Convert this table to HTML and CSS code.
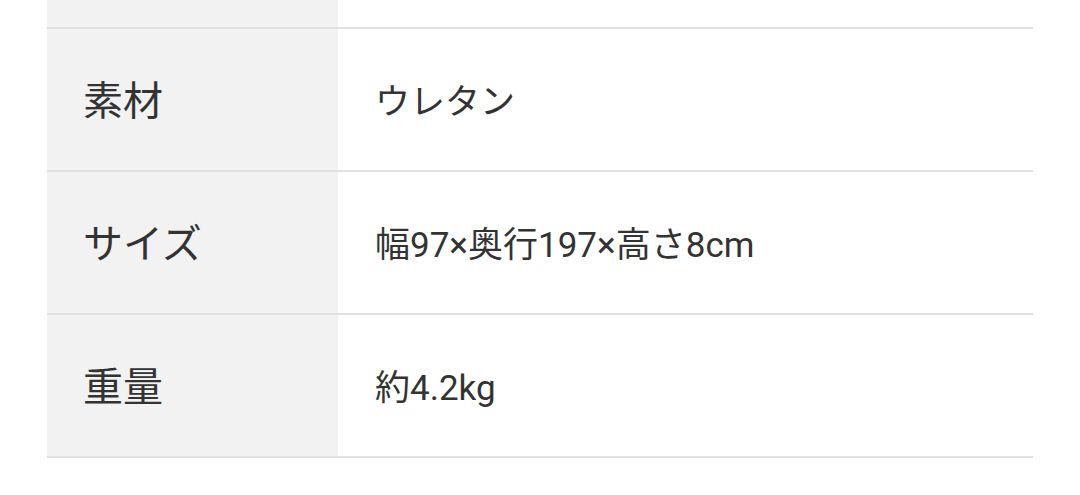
FILE: index.html
```html
<!DOCTYPE html>
<html lang="ja">
<head>
<meta charset="utf-8">
<link rel="stylesheet" href="styles.css">
</head>
<body>
<div class="spec">
  <div class="row row-partial">
    <div class="label"></div>
    <div class="value"></div>
  </div>
  <div class="row">
    <div class="label">素材</div>
    <div class="value">ウレタン</div>
  </div>
  <div class="row">
    <div class="label">サイズ</div>
    <div class="value">幅97×奥行197×高さ8cm</div>
  </div>
  <div class="row">
    <div class="label">重量</div>
    <div class="value">約4.2kg</div>
  </div>
</div>
</body>
</html>
```
FILE: styles.css
```css
html, body {
  margin: 0;
  padding: 0;
  background: #ffffff;
}
body {
  font-family: Roboto, "Noto Sans CJK JP", sans-serif;
  color: #333333;
  overflow: hidden;
}
.spec {
  margin-left: 47px;
  width: 986px;
}
.row {
  display: grid;
  grid-template-columns: 291px 1fr;
  height: 141px;
  border-bottom: 2px solid #e0e0e0;
}
.row-partial {
  height: 27px;
}
.label {
  background: #f2f2f2;
  display: flex;
  align-items: center;
  padding-left: 36px;
  padding-bottom: 3px;
  font-size: 40px;
}
.value {
  display: flex;
  align-items: center;
  padding-left: 37px;
  padding-bottom: 3px;
  font-size: 35px;
}
```
